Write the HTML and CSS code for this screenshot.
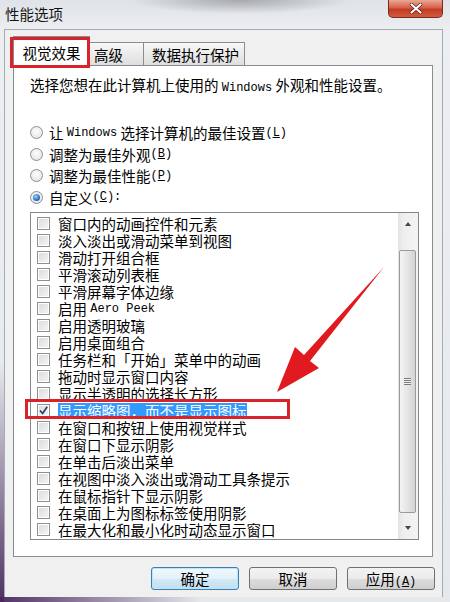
FILE: index.html
```html
<!DOCTYPE html>
<html lang="zh-CN">
<head>
  <meta charset="UTF-8" />
  <title>性能选项</title>
  <link rel="stylesheet" href="styles.css">
</head>
<body>

  <div class="window">
    <div class="titlebar">
      <span class="title">性能选项</span>
      <div class="close">
        <svg width="14" height="11" viewBox="0 0 14 11"><path d="M2.5 1.5l9 8M11.5 1.5l-9 8" stroke="#5a1a10" stroke-width="3.6" stroke-linecap="round"/><path d="M2.5 1.5l9 8M11.5 1.5l-9 8" stroke="#fff" stroke-width="2.2" stroke-linecap="round"/></svg>
      </div>
    </div>

    <div class="client">
      <div class="tabs">
        <div class="tab active">视觉效果</div>
        <div class="tab tab-adv">高级</div>
        <div class="tab tab-dep">数据执行保护</div>
      </div>

      <div class="panel">
        <p class="desc">选择您想在此计算机上使用的 <span class="lat">Windows</span> 外观和性能设置。</p>

        <div class="radios">
          <div class="radio"><span class="dot"></span>让 <span class="lat">Windows</span>&nbsp;选择计算机的最佳设置<span class="lat">(<u>L</u>)</span></div>
          <div class="radio"><span class="dot"></span>调整为最佳外观<span class="lat">(<u>B</u>)</span></div>
          <div class="radio"><span class="dot"></span>调整为最佳性能<span class="lat">(<u>P</u>)</span></div>
          <div class="radio"><span class="dot on"></span>自定义<span class="lat">(<u>C</u>):</span></div>
        </div>

        <div class="listbox">
          <ul class="items">
            <li><span class="cb"></span>窗口内的动画控件和元素</li>
            <li><span class="cb"></span>淡入淡出或滑动菜单到视图</li>
            <li><span class="cb"></span>滑动打开组合框</li>
            <li><span class="cb"></span>平滑滚动列表框</li>
            <li><span class="cb"></span>平滑屏幕字体边缘</li>
            <li><span class="cb"></span>启用 <span class="lat">Aero Peek</span></li>
            <li><span class="cb"></span>启用透明玻璃</li>
            <li><span class="cb"></span>启用桌面组合</li>
            <li><span class="cb"></span>任务栏和「开始」菜单中的动画</li>
            <li><span class="cb"></span>拖动时显示窗口内容</li>
            <li><span class="cb"></span>显示半透明的选择长方形</li>
            <li><span class="cb"><svg width="11" height="11" viewBox="0 0 11 11"><path d="M2 5.5l2.6 3L9.2 1.8" stroke="#263a5e" stroke-width="1.6" fill="none"/></svg></span><span class="sel-text">显示缩略图，而不是显示图标</span></li>
            <li><span class="cb"></span>在窗口和按钮上使用视觉样式</li>
            <li><span class="cb"></span>在窗口下显示阴影</li>
            <li><span class="cb"></span>在单击后淡出菜单</li>
            <li><span class="cb"></span>在视图中淡入淡出或滑动工具条提示</li>
            <li><span class="cb"></span>在鼠标指针下显示阴影</li>
            <li><span class="cb"></span>在桌面上为图标标签使用阴影</li>
            <li><span class="cb"></span>在最大化和最小化时动态显示窗口</li>
          </ul>
          <div class="scrollbar">
            <div class="sb-btn up"></div>
            <div class="track"><div class="thumb"><span class="grip"></span></div></div>
            <div class="sb-btn down"></div>
          </div>
        </div>
      </div>

      <div class="buttons">
        <button class="btn default">确定</button>
        <button class="btn">取消</button>
        <button class="btn">应用<span class="lat">(<u>A</u>)</span></button>
      </div>
    </div>

    <!-- red annotations drawn over the dialog -->
    <svg class="annot" width="450" height="602" viewBox="0 0 450 602">
      <rect x="11.5" y="38.5" width="77" height="28" fill="none" stroke="#d8232b" stroke-width="3"/>
      <rect x="26.5" y="400.5" width="262" height="17" fill="none" stroke="#d8232b" stroke-width="3"/>
      <polygon points="384,267 310,361 319,368 277,392 295,347 304,355" fill="#e01a1e"/>
    </svg>
  </div>

</body>
</html>
```

FILE: styles.css
```css
body {
  margin: 0;
  font-family: "Noto Sans CJK SC", sans-serif;
  font-size: 14.5px;
  color: #000;
}

.lat {
  font-family: "Liberation Mono", monospace;
  font-size: 12px;
  line-height: 1;
}

.window {
  position: relative;
  width: 450px;
  height: 602px;
  overflow: hidden;
  background:
    linear-gradient(to right, rgba(72,40,92,0.95), rgba(72,40,92,0) 45%) bottom / 100% 5px no-repeat,
    linear-gradient(to bottom, rgba(72,40,92,0) 60%, rgba(72,40,92,0.95)) left / 4px 100% no-repeat,
    radial-gradient(ellipse 110px 14px at 240px 0, rgba(80,80,80,0.4), transparent),
    linear-gradient(#dfe3e7, #eceef1 30px, #e6e9ec);
}

/* title bar */
.titlebar {
  height: 29px;
  display: flex;
  justify-content: space-between;
  align-items: flex-start;
}

.title {
  padding-left: 5px;
  line-height: 28px;
  color: #151515;
}

.close {
  width: 55px;
  height: 18px;
  margin-right: 7px;
  box-sizing: border-box;
  border: 1px solid #7a2a1f;
  border-top: none;
  border-radius: 0 0 5px 5px;
  background: linear-gradient(#eaa894, #d8614b 45%, #c13c23 55%, #d35a3f);
  display: flex;
  align-items: center;
  justify-content: center;
}

/* dialog body */
.client {
  margin: 0 7px 0 4px;
  height: 568px;
  box-sizing: border-box;
  border: 1px solid #a3abb4;
  border-bottom: none;
  background: #f0f0f0;
  padding-top: 6px;
}

.tabs {
  display: flex;
  align-items: flex-end;
  height: 30px;
  padding-left: 8px;
}

.tab {
  height: 23px;
  margin-bottom: 1px;
  box-sizing: border-box;
  border: 1px solid #898c95;
  border-bottom: none;
  border-left: none;
  background: linear-gradient(#f7f7f7, #ebebeb 50%, #dedede);
  padding: 2px 0 0 4px;
  line-height: 20px;
}

.tab.active {
  width: 77px;
  height: 30px;
  margin-bottom: 0;
  padding: 0;
  border-left: 1px solid #898c95;
  background: #fff;
  line-height: 31px;
  text-align: center;
  position: relative;
  z-index: 1;
}

.tab-adv {
  width: 54px;
}

.tab-dep {
  width: 101px;
  padding-left: 8px;
}

.panel {
  margin: -1px 0 0 8px;
  width: 420px;
  height: 492px;
  box-sizing: border-box;
  border: 1px solid #898c95;
  background: #fff;
  padding: 10px 14px 0 16px;
}

.desc {
  margin: 0;
  line-height: 18px;
}

.radios {
  margin-top: 28px;
}

.radio {
  display: flex;
  align-items: center;
  height: 21.5px;
  line-height: 21.5px;
  white-space: pre;
}

.dot {
  width: 13px;
  height: 13px;
  box-sizing: border-box;
  border: 1px solid #8e8f8f;
  border-radius: 50%;
  background: radial-gradient(circle at 50% 40%, #fdfdfd, #dedfe1);
  margin-right: 6px;
  display: flex;
  align-items: center;
  justify-content: center;
}

.dot.on::after {
  content: "";
  width: 7px;
  height: 7px;
  border-radius: 50%;
  background: radial-gradient(circle at 40% 35%, #9fd4fb, #2a6fc4 60%, #164c98);
}

/* list with checkboxes */
.listbox {
  margin-top: 4px;
  width: 389px;
  height: 328px;
  box-sizing: border-box;
  border: 1px solid #828790;
  display: flex;
}

.items {
  list-style: none;
  margin: 0;
  padding: 2px 0 0 6px;
  flex: 1;
}

.items li {
  height: 17px;
  line-height: 17px;
  display: flex;
  align-items: center;
  white-space: pre;
}

.cb {
  width: 13px;
  height: 13px;
  box-sizing: border-box;
  border: 1px solid #8e8f8f;
  background: linear-gradient(135deg, #d8dadd, #f6f6f6);
  box-shadow: inset 0 0 0 1px #fff;
  margin-right: 8px;
  display: flex;
  align-items: center;
  justify-content: center;
}

.sel-text {
  display: inline-block;
  height: 16px;
  line-height: 16px;
  background: #3399ff;
  color: #fff;
}

.scrollbar {
  width: 20px;
  display: flex;
  flex-direction: column;
  background: linear-gradient(to right, #e2e2e2, #eeeeee 25%, #f4f4f4);
}

.sb-btn {
  height: 22px;
  display: flex;
  align-items: center;
  justify-content: center;
}

.sb-btn.up::before {
  content: "";
  border-left: 3.5px solid transparent;
  border-right: 3.5px solid transparent;
  border-bottom: 4px solid #444;
}

.sb-btn.down::before {
  content: "";
  border-left: 3.5px solid transparent;
  border-right: 3.5px solid transparent;
  border-top: 4px solid #444;
}

.track {
  flex: 1;
}

.thumb {
  margin: 15px 2px 0 1px;
  height: 263px;
  box-sizing: border-box;
  border: 1px solid #9a9a9a;
  border-radius: 2px;
  background: linear-gradient(to right, #f4f4f4, #e6e6e6 45%, #d4d4d4);
  display: flex;
  align-items: center;
  justify-content: center;
}

.grip {
  width: 7px;
  height: 7px;
  background: repeating-linear-gradient(#7b7b7b 0 1px, #f2f2f2 1px 2px);
}

/* dialog buttons */
.buttons {
  display: flex;
  justify-content: flex-end;
  gap: 10px;
  margin-top: 10px;
  padding-right: 7px;
}

.btn {
  width: 88px;
  height: 23px;
  padding: 0;
  font-family: inherit;
  font-size: 14.5px;
  color: #000;
  line-height: 21px;
  border: 1px solid #707070;
  border-radius: 3px;
  background: linear-gradient(#f3f3f3, #ebebeb 50%, #dddddd 51%, #cfcfcf);
}

.btn.default {
  border-color: #3c7fb1;
  box-shadow: inset 0 0 0 1px #bfe3f8;
  background: linear-gradient(#f1f8fc, #e3f1fa 50%, #d3e9f6 51%, #c2dff0);
}

.annot {
  position: absolute;
  left: 0;
  top: 0;
  pointer-events: none;
  z-index: 10;
}
```
